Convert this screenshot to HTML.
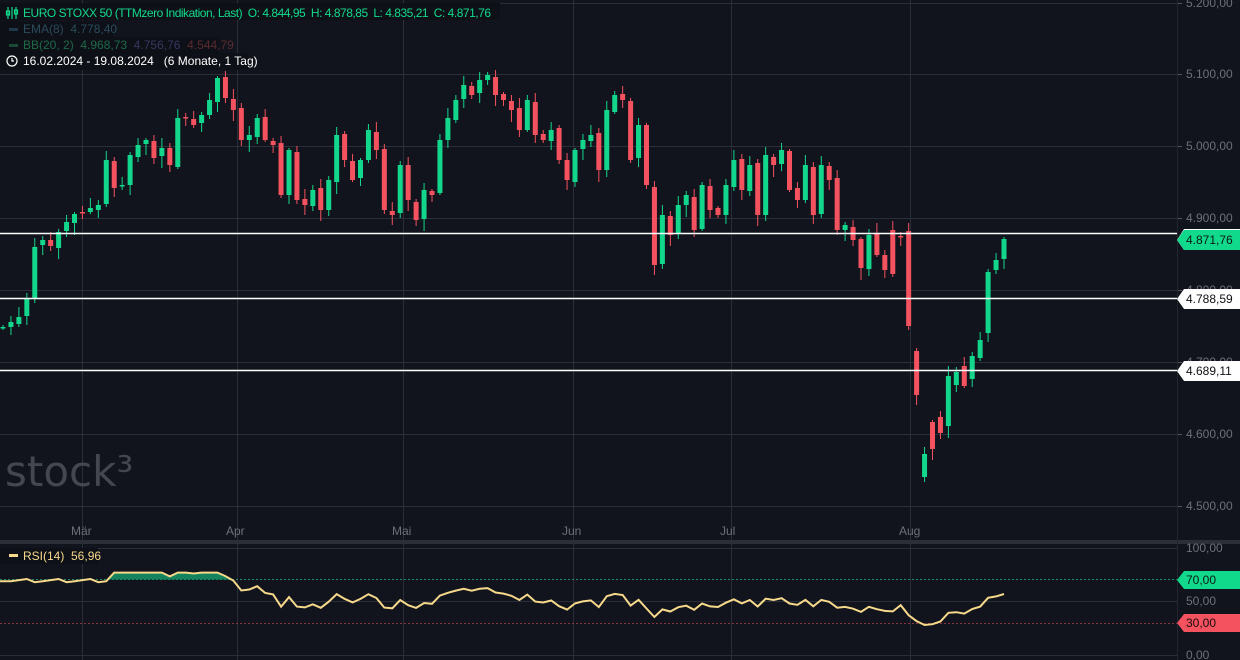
<!DOCTYPE html>
<html><head><meta charset="utf-8"><style>
html,body{margin:0;padding:0;background:#11141c;width:1240px;height:660px;overflow:hidden;font-family:"Liberation Sans","DejaVu Sans",sans-serif}
svg{display:block}
.t{font-family:"Liberation Sans","DejaVu Sans",sans-serif;font-size:12px;white-space:pre}
</style></head><body>
<svg id="s" width="1240" height="660" xmlns="http://www.w3.org/2000/svg" xml:space="preserve">
<rect width="1240" height="660" fill="#11141c"/>
<g id="grid" stroke="#2a2e38" stroke-width="1"></g>
<g id="candles"></g>
<line x1="0" y1="233.5" x2="1177" y2="233.5" stroke="#fff" stroke-width="1.5"/>
<line x1="0" y1="298.5" x2="1177" y2="298.5" stroke="#fff" stroke-width="1.5"/>
<line x1="0" y1="370.5" x2="1177" y2="370.5" stroke="#fff" stroke-width="1.5"/>
<text x="5" y="486" font-size="42" fill="#44474f" font-family="DejaVu Sans,sans-serif">stock³</text>
<rect x="0" y="540" width="1240" height="4" fill="#2c2f37"/>
<line x1="0" y1="579.5" x2="1177" y2="579.5" stroke="#1f8a63" stroke-dasharray="2,2"/>
<line x1="0" y1="623.5" x2="1177" y2="623.5" stroke="#8a3340" stroke-dasharray="2,2"/>
<g id="rsi"></g>
<line x1="1177.5" y1="0" x2="1177.5" y2="660" stroke="#23262e"/>
<g id="axis" class="t" fill="#6d7078"></g>
<path d="M1177 240 L1184 229 L1240 229 L1240 250 L1184 250 Z" fill="#fff"/>
<path d="M1177 240 L1184 230 L1240 230 L1240 250 L1184 250 Z" fill="#10d98c"/>
<text x="1186" y="244" class="t" fill="#0b1a13">4.871,76</text>
<path d="M1177 299 L1184 289 L1240 289 L1240 309 L1184 309 Z" fill="#fff"/>
<text x="1186" y="303" class="t" fill="#111">4.788,59</text>
<path d="M1177 371 L1184 361 L1240 361 L1240 381 L1184 381 Z" fill="#fff"/>
<text x="1186" y="375" class="t" fill="#111">4.689,11</text>
<path d="M1177 580 L1184 571 L1240 571 L1240 589 L1184 589 Z" fill="#10d98c"/>
<text x="1186" y="584" class="t" fill="#0b1a13">70,00</text>
<path d="M1177 623 L1184 614 L1240 614 L1240 632 L1184 632 Z" fill="#f5525f"/>
<text x="1186" y="627" class="t" fill="#1a0b0d">30,00</text>
<rect x="0" y="3" width="500" height="17" fill="#0d1016"/>
<rect x="0" y="21" width="113" height="16" fill="#0d1016"/>
<rect x="0" y="37" width="220" height="16" fill="#0d1016"/>
<rect x="0" y="53" width="248" height="17" fill="#0d1016"/>
<g class="t">
<text x="23" y="17" fill="#10d98c" textLength="468" xml:space="preserve">EURO STOXX 50 (TTMzero Indikation, Last)  O: 4.844,95  H: 4.878,85  L: 4.835,21  C: 4.871,76</text>
<g stroke="#10d98c" stroke-width="1.2" fill="none"><path d="M8 7v12M12 7v12M16 7v12"/><rect x="6.5" y="11" width="3" height="4"/><rect x="14.5" y="10" width="3" height="4"/></g>
<rect x="9" y="28" width="9" height="3" fill="#1e3a4a"/><text x="23" y="33" fill="#2b4b5c" xml:space="preserve">EMA(8)  4.778,40</text>
<rect x="9" y="44" width="9" height="3" fill="#1a4a36"/><text x="23" y="49" fill="#1d6a49" xml:space="preserve">BB(20, 2)  4.968,73  <tspan fill="#3b3560">4.756,76</tspan>  <tspan fill="#5a2a2e">4.544,79</tspan></text>
<circle cx="12" cy="61" r="5" fill="none" stroke="#fff" stroke-width="1.2"/><path d="M12 58v3h2" stroke="#fff" fill="none" stroke-width="1.2"/>
<text x="23" y="65" fill="#fff" xml:space="preserve">16.02.2024 - 19.08.2024   (6 Monate, 1 Tag)</text>
<rect x="0" y="548" width="98" height="16" fill="#0d1016"/>
<rect x="9" y="554" width="9" height="3" fill="#f7d98b"/><text x="23" y="560" fill="#f7d98b" xml:space="preserve">RSI(14)  56,96</text>
</g>
</svg>
<script>
(function(){
var NS="http://www.w3.org/2000/svg";
function el(p,t,a){var e=document.createElementNS(NS,t);for(var k in a)e.setAttribute(k,a[k]);p.appendChild(e);return e;}
var grid=document.getElementById('grid'),axis=document.getElementById('axis');
var vx=[82,237,403,573,731,910],mn=["Mär","Apr","Mai","Jun","Jul","Aug"];
vx.forEach(function(x,i){el(grid,'line',{x1:x+.5,y1:0,x2:x+.5,y2:660});var t=el(axis,'text',{x:x-11,y:535});t.textContent=mn[i];});
var pl=[[3,"5.200,00"],[74,"5.100,00"],[146,"5.000,00"],[218,"4.900,00"],[290,"4.800,00"],[362,"4.700,00"],[434,"4.600,00"],[506,"4.500,00"]];
pl.forEach(function(p){el(grid,'line',{x1:0,y1:p[0]+.5,x2:1177,y2:p[0]+.5});el(grid,'line',{x1:1177,y1:p[0]+.5,x2:1182,y2:p[0]+.5,stroke:"#555"});var t=el(axis,'text',{x:1186,y:p[0]+4});t.textContent=p[1];});
[[548,"100,00"],[601,"50,00"],[655,"0,00"]].forEach(function(p){el(grid,'line',{x1:0,y1:p[0]+.5,x2:1177,y2:p[0]+.5});var t=el(axis,'text',{x:1186,y:p[0]+4});t.textContent=p[1];});
var d=[327,322,317,298,247,240,246,232,222,214,212,208,
205,160,188,185,155,145,140,158,148,165,118,118,125,115,100,78,
98,110,140,135,118,140,145,195,150,200,205,190,210,180,135,160,180,160,130,150,210,215,165,200,220,190,
195,140,118,100,85,95,80,75,95,100,110,130,100,135,140,130,160,180,150,140,
135,170,110,95,100,160,125,185,265,215,235,205,195,230,185,210,215,185,160,190,165,215,155,165,150,
190,200,165,215,165,180,230,225,240,268,235,255,270,[230,274],[236,237],[231,326],
[351,395],[477,454],[422,449],[417,433],[426,376],[385,372],[366,386],[379,356],[358,340],[333,272],[270,260],[259,239]];
var n=d.length,step=(1004-3)/(n-1),cg=document.getElementById('candles'),prev=330,cl=[];
for(var i=0;i<n;i++){var o,c;if(typeof d[i]=="number"){c=d[i];o=prev+((i*7)%5-2);}else{o=d[i][0];c=d[i][1];}
prev=c;cl.push(c);var x=3+i*step,tp=Math.min(o,c),bt=Math.max(o,c),h=Math.max(bt-tp,1.5);
var col=c<o?"#12d68b":"#f5525f";var w1=(i*13)%9+2,w2=(i*17)%11+2;
el(cg,'line',{x1:x,y1:tp-w1,x2:x,y2:bt+w2,stroke:col,'stroke-width':1});
el(cg,'rect',{x:x-2.5,y:tp,width:5,height:h,fill:col});}
var rg=document.getElementById('rsi'),ag=0,al=0,pts=[],p14=14;
for(var i=1;i<n;i++){var ch=cl[i-1]-cl[i],g=Math.max(ch,0),l=Math.max(-ch,0);
if(i<=p14){ag+=g/p14;al+=l/p14;}else{ag=(ag*13+g)/14;al=(al*13+l)/14;}
var r=al==0?100:100-100/(1+ag/al);if(i<p14)r=68+((i*5)%4);r=Math.min(77,Math.max(r,28));
pts.push([3+i*step,655-r*1.07]);}
pts.unshift([0,pts[0][1]]);
var ds="M"+pts.map(function(p){return p[0].toFixed(1)+" "+p[1].toFixed(1)}).join(" L");
var defs=el(rg,'defs',{});var cp=el(defs,'clipPath',{id:'c7'});el(cp,'rect',{x:0,y:0,width:1177,height:579.5});
el(rg,'path',{d:ds+" L"+pts[pts.length-1][0]+" 579.5 L0 579.5 Z",fill:"#13845e",'clip-path':"url(#c7)"});
el(rg,'path',{d:ds,fill:"none",stroke:"#f7d98b",'stroke-width':2});
})();
</script>
</body></html>
